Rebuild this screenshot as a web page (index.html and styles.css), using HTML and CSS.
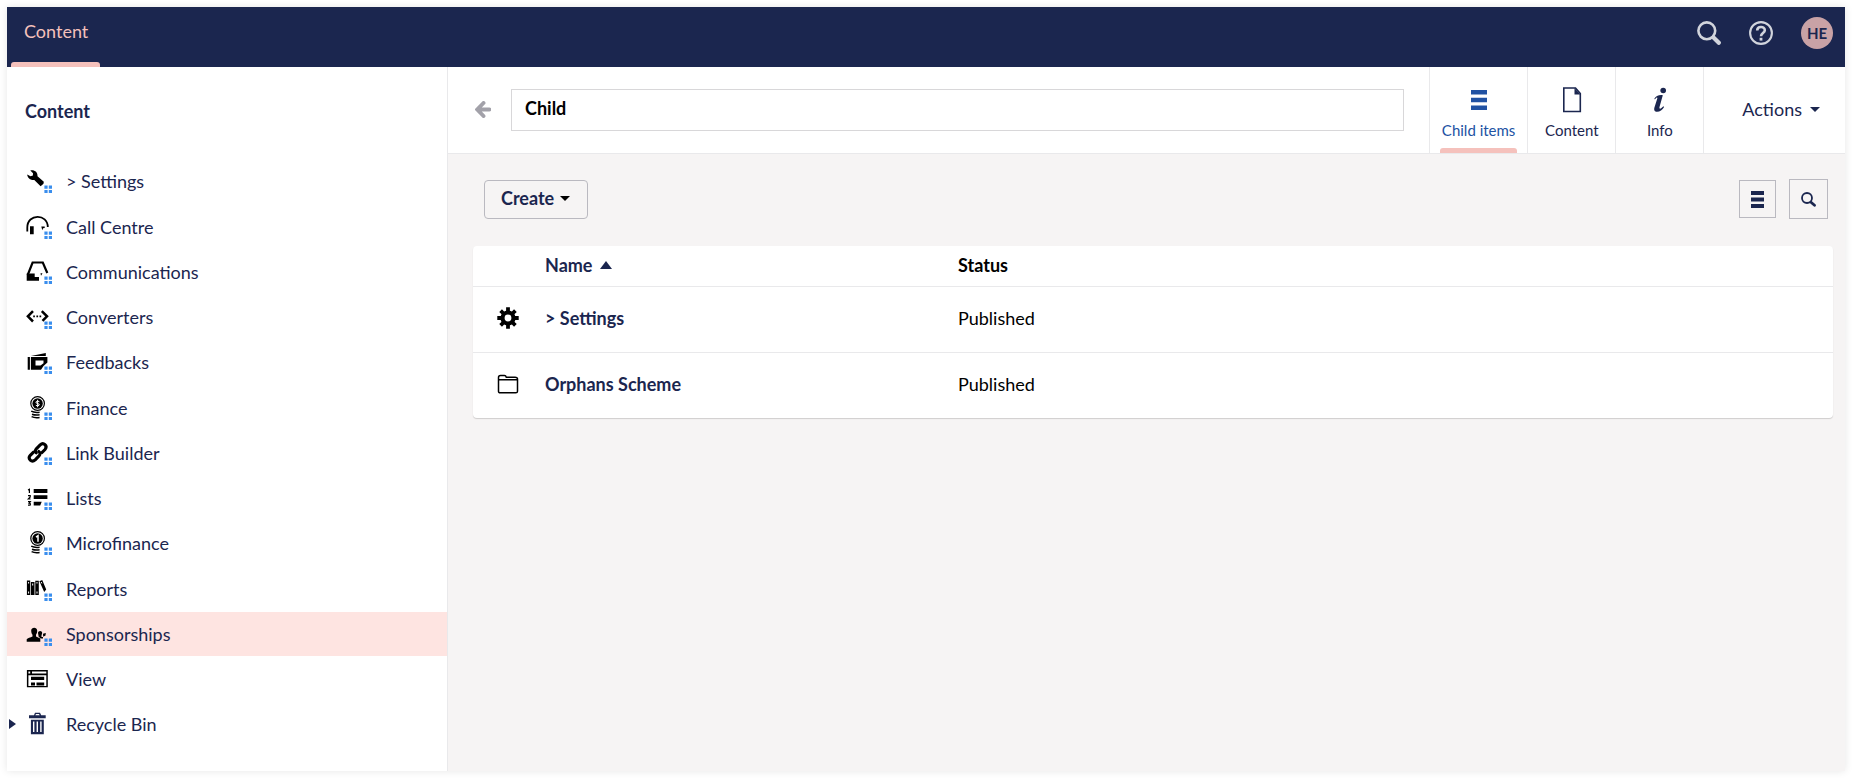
FILE: index.html
```
<!DOCTYPE html>
<html lang="en">
<head>
<meta charset="utf-8">
<title>Content</title>
<link rel="stylesheet" href="styles.css">
</head>
<body>
<svg class="defs" aria-hidden="true">
  <symbol id="dots" viewBox="0 0 26 26"><path fill="#3a8eed" d="M18.4 17.5h3.2v3.2h-3.2zM22.8 17.5h3.2v3.2h-3.2zM18.4 21.9h3.2v3.2h-3.2zM22.8 21.9h3.2v3.2h-3.2z"/></symbol>
  <symbol id="coin" viewBox="0 0 26 26"><circle cx="11.6" cy="8.5" r="6.8" fill="none" stroke="#000" stroke-width="1.2"/><circle cx="11.6" cy="8.5" r="5.2"/><path d="M5.2 16.2q3.4 1.7 8.4 1M6 19.2q3 1.2 7.6.6M5.6 21.6q3.400 1.600 8 .8" fill="none" stroke="#000" stroke-width="1.500"/></symbol>
  <symbol id="bars" viewBox="0 0 16 20"><path fill="currentColor" d="M0 0h16v4.600H0zM0 7.700h16v4.600H0zM0 15.400h16V20H0z"/></symbol>
  <symbol id="search" viewBox="0 0 24 24"><circle cx="9.800" cy="9.800" r="8.400" fill="none" stroke="currentColor" stroke-width="2.600"/><path d="M16.500 16.500l5.300 5.300" stroke="currentColor" stroke-width="4.200" stroke-linecap="round"/></symbol>
</svg>
<div class="app">
  <header class="topbar">
    <nav class="sections"><a class="section" href="#">Content</a></nav>
    <div class="tools">
      <button class="tool" aria-label="Search"><svg width="24" height="24"><use href="#search"/></svg></button>
      <button class="tool" aria-label="Help"><svg width="24" height="24" viewBox="0 0 24 24" fill="none" stroke="currentColor"><circle cx="12" cy="12" r="10.900" stroke-width="2.100"/><path d="M8.200 9.500C8.200 4.800 15.800 4.800 15.800 9.200C15.800 12 12 12 12 15.200" stroke-width="2.600"/><path d="M12 16.800v2.800" stroke-width="2.800"/></svg></button>
      <button class="avatar">HE</button>
    </div>
  </header>
  <div class="body">
    <aside class="sidebar">
      <h1 class="tree-title">Content</h1>
      <ul class="tree">
        <li class="node"><svg class="node-icon" viewBox="0 0 26 26"><path d="M4.300 2.500C8.500 1.700 11.800 4 11.500 8.300L17.800 13.800L17.500 15.800L14.600 18.300L8.300 12C5 12.700 1.500 10.300 1.200 6.600L4.500 8.300L6.900 7.600L7 5.200Z"/><use href="#dots"/></svg><a class="node-link" href="#">&gt; Settings</a></li>
        <li class="node"><svg class="node-icon" viewBox="0 0 26 26"><path d="M1.300 17.500V13.500C1.300-.7 21.800-.7 21.800 13" fill="none" stroke="#000" stroke-width="1.800"/><path d="M4 12.200h3.700v8H4zM15.300 12.500h3.400v1.500l-1.600.2-.8 2z"/><use href="#dots"/></svg><a class="node-link" href="#">Call Centre</a></li>
        <li class="node"><svg class="node-icon" viewBox="0 0 26 26"><path d="M1.700 16L6.600 3.500H16.800L21.300 14" fill="none" stroke="#000" stroke-width="2.200"/><path d="M.7 14.500H8.700V18H13V21.800H.7ZM14.500 14.300h2l-1.500 2.500z"/><use href="#dots"/></svg><a class="node-link" href="#">Communications</a></li>
        <li class="node"><svg class="node-icon" viewBox="0 0 26 26"><path d="M7 7.200L1.900 12.300L7 17.500M15.800 7.200L21 12.300L16.500 16.800" fill="none" stroke="#000" stroke-width="2.500"/><path d="M7.200 11.500h1.700v1.700H7.200zM10.400 11.500h1.700v1.700h-1.700zM13.500 11.500h1.700v1.700h-1.700z"/><use href="#dots"/></svg><a class="node-link" href="#">Converters</a></li>
        <li class="node"><svg class="node-icon" viewBox="0 0 26 26"><path d="M1.700 8h2.200v12.800H1.700zM4.900 7.100L19.800 3.900V6.900z"/><path fill-rule="evenodd" d="M4.900 7.900H21.400V13.500L17.500 17L15 20.800H4.900ZM9.500 11.500V16.500H14.500L17.500 14.200V11.500Z"/><use href="#dots"/></svg><a class="node-link" href="#">Feedbacks</a></li>
        <li class="node"><svg class="node-icon" viewBox="0 0 26 26"><use href="#coin"/><path d="M13.400 6.700Q11.500 5.500 10.200 6.700T11.600 8.500T13 10.300T9.800 10.300M11.600 4.800V12.200" fill="none" stroke="#fff" stroke-width="1"/><use href="#dots"/></svg><a class="node-link" href="#">Finance</a></li>
        <li class="node"><svg class="node-icon" viewBox="0 0 26 26"><g fill="none" stroke="#000" stroke-width="3.100" stroke-linecap="round"><path d="M10.300 12.800C8.800 11.500 9.300 9.800 10.500 8.600L14.200 4.900C17.500 1.800 22 6 19 9.500L16 12.500"/><path d="M12.800 11.500C14.800 12.800 14 15 12.800 16.200L9.200 19.800C5.600 23 1.300 18.800 4.300 15.300L7.500 12.200"/></g><use href="#dots"/></svg><a class="node-link" href="#">Link Builder</a></li>
        <li class="node"><svg class="node-icon" viewBox="0 0 26 26"><path d="M7.700 4h13.700v3.900H7.700zM7.700 10.300h13.700v3.800H7.700zM7.700 16.700h8l-1.500 3.700H7.700z"/><path d="M2 5l1.400-.8V8M2 10.600h2.200v1.300L2.300 14h2.300M2 16.700h2.300l-1.200 1.500q2 .2 1 1.900H2" fill="none" stroke="#000" stroke-width="1.200"/><use href="#dots"/></svg><a class="node-link" href="#">Lists</a></li>
        <li class="node"><svg class="node-icon" viewBox="0 0 26 26"><use href="#coin"/><path d="M10 7.200L12 5.800V11.800" fill="none" stroke="#fff" stroke-width="1.500"/><use href="#dots"/></svg><a class="node-link" href="#">Microfinance</a></li>
        <li class="node"><svg class="node-icon" viewBox="0 0 26 26"><path d="M.9 4.500h3.300V19H.9zM4.900 6h3.600v13H4.900zM9.300 4.700h3.500V19H9.300zM13.400 5.200l2.800-1.300 4 9.500-2 2.600z"/><path d="M2.600 6v1.500M2.600 15.500v2M6.700 7.500v2M11 6v1.500M11 15.500v2M15.200 6l.6 1.400" stroke="#fff" stroke-width="1"/><use href="#dots"/></svg><a class="node-link" href="#">Reports</a></li>
        <li class="node node-active"><svg class="node-icon" viewBox="0 0 26 26"><path d="M5.200 9.500C5.200 5.900 11.200 5.700 11.200 9.800C11.200 12 10.500 13 10 13.800V15.600L14.300 17.500V20.700H.7V18.300C1.500 17.300 4.500 16.500 6.500 15.600V13.800C5.700 12.800 5.200 11.500 5.200 9.500ZM12 12C12 9.300 16.200 9.300 16.200 12L15.500 14.600V16H17V17.500H14.800L12.700 15.800ZM17 12.700l2.800-.8-.3 2.600-2.300 1.200z"/><use href="#dots"/></svg><a class="node-link" href="#">Sponsorships</a></li>
        <li class="node"><svg class="node-icon" viewBox="0 0 26 26"><path fill-rule="evenodd" d="M.9 4H21.800V21.200H.9ZM2.400 9.300V19.900H20.300V9.300ZM2.400 5.600V7.400H4.200V5.600ZM6 5.600V7.400H20.300V5.600ZM5 10.700h13.200v3.200H5zM5 16.500h4v3H5zM10.500 16.500h7.700v3h-7.700z"/></svg><a class="node-link" href="#">View</a></li>
        <li class="node"><button class="expander" aria-label="Expand Recycle Bin"></button><svg class="node-icon bin" viewBox="0 0 26 26"><path fill-rule="evenodd" d="M3 4.300H8L9 1.800H14L15.200 4.300H19.700V7.300H3ZM9.300 4.300H13.700L13 3H10ZM4.900 8.700H17.800V23.200H4.900ZM7 10.500V21H8.400V10.500ZM10.600 10.500V21H12V10.500ZM14.200 10.500V21H15.600V10.500Z"/></svg><a class="node-link" href="#">Recycle Bin</a></li>
      </ul>
    </aside>
    <main class="editor">
      <div class="editor-head">
        <button class="back" aria-label="Back"><svg width="16" height="17" viewBox="0 0 16 17"><path d="M8.500 2L2.300 8.500L8.500 15M3 8.500H14.300" fill="none" stroke="currentColor" stroke-width="3.900" stroke-linecap="round"/></svg></button>
        <input class="name" type="text" value="Child" aria-label="Name">
        <nav class="apps">
          <button class="tab tab-active"><svg class="tab-icon" viewBox="0 0 26 26"><use href="#bars" x="5" y="3" width="16" height="20"/></svg>Child items</button>
          <button class="tab"><svg class="tab-icon" viewBox="0 0 26 26"><path fill="none" stroke="currentColor" stroke-width="1.600" d="M4.800 1H16.500L21.300 6.500V24.500H4.800Z"/><path fill="currentColor" d="M15.500 1L21.500 7.500H15.500Z"/></svg>Content</button>
          <button class="tab"><svg class="tab-icon" viewBox="0 0 26 26" fill="currentColor"><circle cx="16.200" cy="3.500" r="2.800"/><path d="M7.200 12C8.700 9.200 12 7.600 15.800 8.200L12.500 20C12 22.300 13.800 22.300 16.300 19.300L17.100 20C15.300 23.300 12.500 25 9.800 24.800C7.200 24.600 6.800 22.500 7.500 20.200L10.300 11.500C10.600 10 9.500 10.300 8 12.300Z"/></svg>Info</button>
          <button class="actions">Actions<span class="caret"></span></button>
        </nav>
      </div>
      <div class="content">
        <div class="toolbar">
          <button class="create">Create<span class="caret"></span></button>
          <div class="views">
            <button class="view-btn" aria-label="List view"><svg width="13" height="17" viewBox="0 0 16 20" preserveAspectRatio="none"><path fill="currentColor" d="M0 0h16v4.600H0zM0 7.700h16v4.600H0zM0 15.400h16V20H0z"/></svg></button>
            <button class="view-btn find" aria-label="Search items"><svg width="15" height="15" viewBox="0 0 15 15"><circle cx="6" cy="6" r="5" fill="none" stroke="currentColor" stroke-width="1.800"/><path d="M10 10.300l3.500 3" stroke="currentColor" stroke-width="2.800" stroke-linecap="round"/></svg></button>
          </div>
        </div>
        <table class="items">
          <thead>
            <tr><th class="col-icon"></th><th class="col-name"><button class="sort">Name<span class="sort-up"></span></button></th><th>Status</th></tr>
          </thead>
          <tbody>
            <tr>
              <td class="col-icon"><svg class="item-icon" viewBox="0 0 22 22"><circle cx="11" cy="11" r="5.500" fill="none" stroke="#000" stroke-width="4.200"/><path d="M11 .3V5M11 17v4.700M.3 11H5M17 11h4.700M3.600 3.600L6.500 6.500M15.500 15.500l2.900 2.900M3.600 18.400l2.900-2.900M15.500 6.500l2.900-2.900" stroke="#000" stroke-width="3.800"/></svg></td>
              <td><a class="item-link" href="#">&gt; Settings</a></td><td>Published</td>
            </tr>
            <tr>
              <td class="col-icon"><svg class="item-icon" viewBox="0 0 22 22"><path d="M1.500 7V4.500Q1.500 2.600 3.500 2.600H7.500Q8.800 2.600 9.300 4.200H18Q20.500 4.200 20.500 6V7M1.500 6.800H20.500V18.200Q20.500 19.800 18.800 19.800H3.200Q1.500 19.800 1.500 18.200Z" fill="none" stroke="#000" stroke-width="1.500"/></svg></td>
              <td><a class="item-link" href="#">Orphans Scheme</a></td><td>Published</td>
            </tr>
          </tbody>
        </table>
      </div>
    </main>
  </div>
</div>
</body>
</html>
```
FILE: styles.css
```
* { box-sizing: border-box; }

body {
  margin: 0;
  padding: 7px 8px 8px 7px;
  min-height: 100vh;
  display: flex;
  background: #fff;
  color: #000;
  font: 18px/24px Lato, "Open Sans", sans-serif;
}

button {
  margin: 0;
  padding: 0;
  border: 0;
  background: none;
  color: inherit;
  font: inherit;
  cursor: pointer;
}

a { color: inherit; text-decoration: none; }
svg { display: block; }
.defs { position: absolute; width: 0; height: 0; }

.app {
  flex: 1;
  min-width: 0;
  display: flex;
  flex-direction: column;
  box-shadow: 0 0 8px rgba(0, 0, 0, 0.1);
}

/* Top bar */
.topbar {
  height: 60px;
  display: flex;
  justify-content: space-between;
  padding: 0 12px 0 4px;
  background: #1b264f;
}
.sections { display: flex; }
.section {
  display: flex;
  padding: 12px 12px 0 13px;
  color: #f5c1bc;
  position: relative;
}
.section::after,
.tab-active::after {
  content: "";
  position: absolute;
  left: 0;
  right: 0;
  bottom: 0;
  height: 5px;
  border-radius: 3px 3px 0 0;
  background: #f5c1bc;
}
.tools {
  display: flex;
  align-items: center;
  gap: 28px;
  height: 51px;
}
.tool { color: #d1d4dc; }
.avatar {
  width: 32px;
  height: 32px;
  border-radius: 50%;
  background: #c9a2a6;
  color: #1b264f;
  font-size: 15px;
  font-weight: 700;
  line-height: 30px;
}

.body { flex: 1; display: flex; }

/* Tree */
.sidebar {
  width: 441px;
  flex: none;
  background: #fff;
  border-right: 1px solid #e9e9eb;
  color: #1b264f;
}
.tree-title {
  margin: 0;
  padding: 32px 18px 36px;
  font-size: 18px;
  line-height: 24px;
  font-weight: 700;
}
.tree { margin: 0; padding: 0 0 20px; list-style: none; }
.node {
  position: relative;
  display: flex;
  align-items: center;
  gap: 14px;
  height: 44px;
  margin-bottom: 1px;
  padding-left: 19px;
}
.node:nth-child(4n + 1) { margin-bottom: 2px; }
.node-active { background: #fee4e1; }
.node-icon { width: 26px; height: 26px; flex: none; }
.bin { fill: #1b264f; }
.expander {
  position: absolute;
  left: 2px;
  top: 17px;
  border-left: 7px solid #1b264f;
  border-top: 5px solid transparent;
  border-bottom: 5px solid transparent;
}

/* Editor */
.editor {
  flex: 1;
  min-width: 0;
  display: flex;
  flex-direction: column;
  background: #f6f4f4;
}
.editor-head {
  display: flex;
  align-items: center;
  height: 87px;
  padding-left: 27px;
  background: #fff;
  border-bottom: 1px solid #e9e9eb;
}
.back { color: #a2a1a9; margin-right: 20px; padding-bottom: 2px; }
.name {
  flex: 1;
  min-width: 0;
  height: 42px;
  padding: 0 13px 4px;
  border: 1px solid #d8d7d9;
  border-radius: 0;
  background: #fff;
  color: #000;
  font: 700 18px/24px Lato, "Open Sans", sans-serif;
}
.apps {
  display: flex;
  align-self: stretch;
  margin-left: 25px;
  color: #1b264f;
}
.tab {
  position: relative;
  display: flex;
  flex-direction: column;
  align-items: center;
  justify-content: center;
  gap: 7px;
  min-width: 88px;
  padding: 7px 12px 0;
  border-left: 1px solid #e9e9eb;
  font-size: 15px;
  line-height: 20px;
}
.tab-icon { width: 26px; height: 26px; }
.tab-active { color: #2152a3; }
.tab-active::after { left: 10px; right: 10px; }
.actions {
  display: flex;
  align-items: center;
  gap: 8px;
  padding: 0 25px 2px 38px;
  border-left: 1px solid #e9e9eb;
}
.caret {
  border-top: 5px solid currentColor;
  border-left: 5px solid transparent;
  border-right: 5px solid transparent;
}

.content { padding: 25px 12px 24px 25px; }
.toolbar {
  display: flex;
  align-items: center;
  justify-content: space-between;
  padding: 0 5px 0 11px;
  margin-bottom: 27px;
}
.create {
  display: flex;
  align-items: center;
  gap: 6px;
  height: 39px;
  padding: 0 17px 2px 16px;
  border: 1px solid #bab9c0;
  border-radius: 4px;
  color: #1b264f;
  font-weight: 700;
}
.create .caret { border-top-color: #000; }
.views { display: flex; align-items: center; gap: 13px; }
.view-btn {
  display: flex;
  align-items: center;
  justify-content: center;
  width: 37px;
  height: 38px;
  border: 1px solid #bab9c0;
  color: #1b264f;
}
.find { width: 39px; height: 40px; }

.items {
  width: 100%;
  table-layout: fixed;
  border-collapse: separate;
  border-spacing: 0;
  border-radius: 4px;
  background: #fff;
  box-shadow: 0 1px 1px rgba(0, 0, 0, 0.16);
}
.items th {
  height: 40px;
  padding: 0 0 3px;
  text-align: left;
  font-weight: 700;
}
.items td { height: 66px; padding: 0 0 3px; border-top: 1px solid #e9e9eb; }
.items .col-icon { width: 72px; padding-left: 24px; }
.col-name { width: 413px; }
.sort { display: flex; align-items: center; gap: 8px; color: #1b264f; }
.sort-up {
  border-bottom: 8px solid #1b264f;
  border-left: 6px solid transparent;
  border-right: 6px solid transparent;
}
.item-icon { width: 22px; height: 22px; }
.item-link { color: #1b264f; font-weight: 700; }
```
